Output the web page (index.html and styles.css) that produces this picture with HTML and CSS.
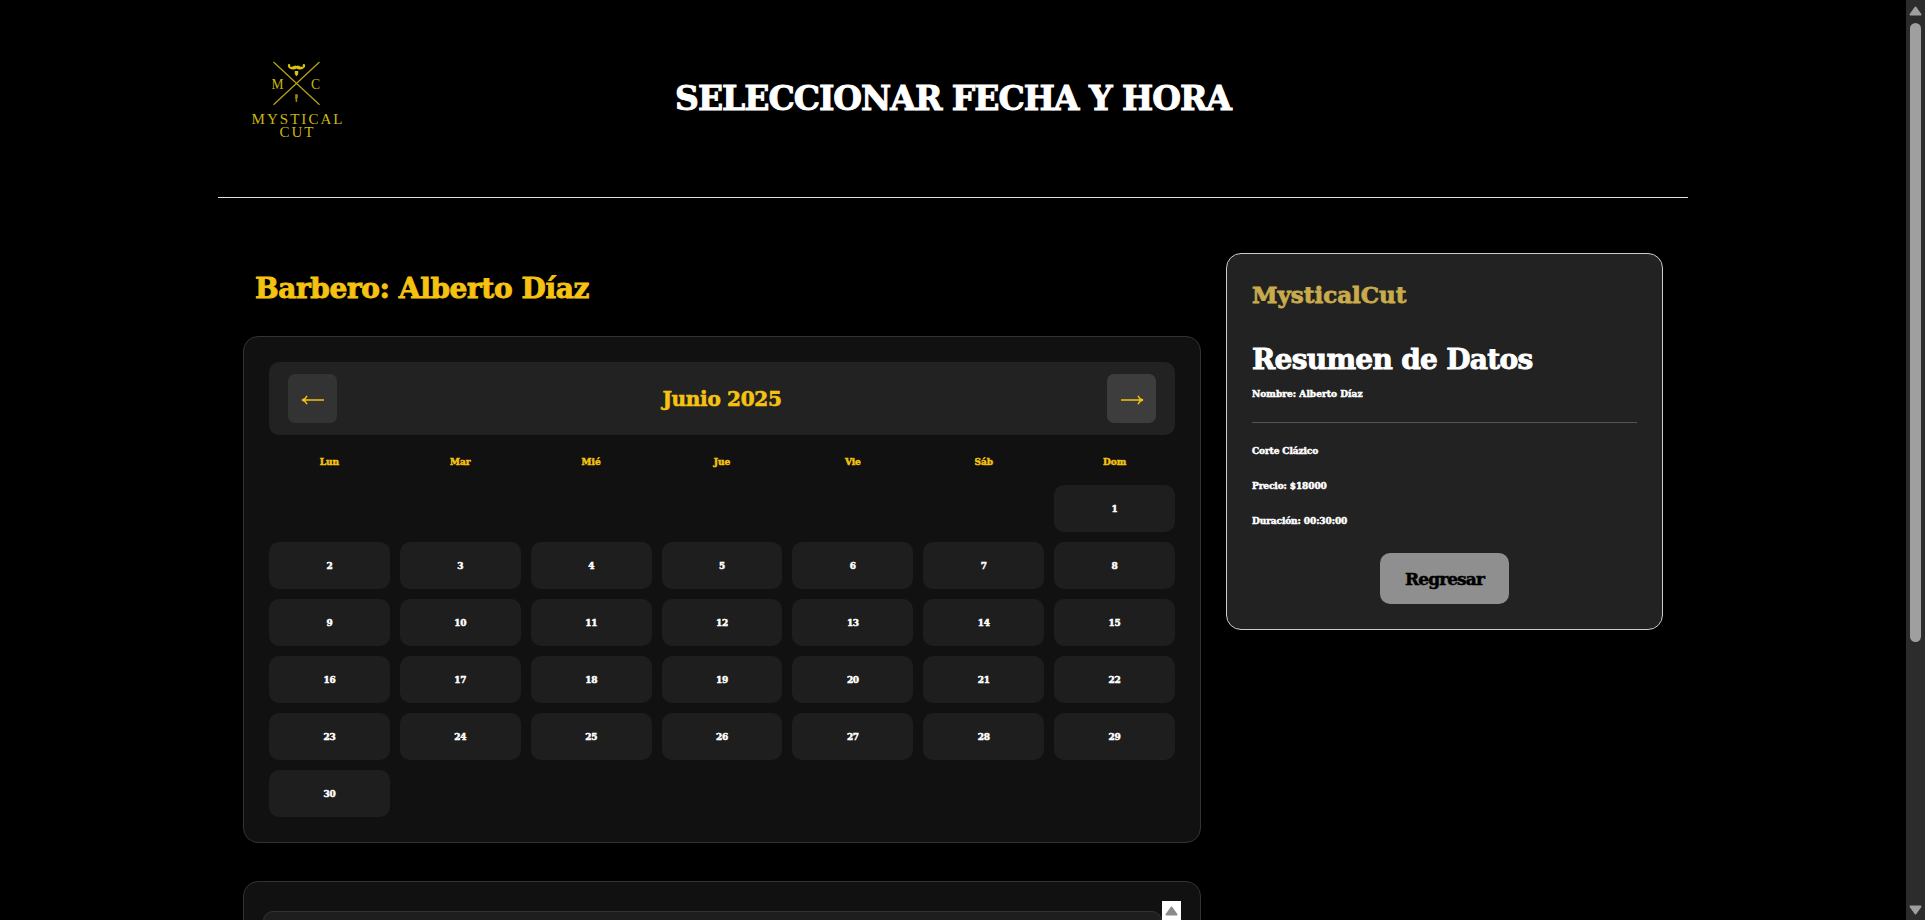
FILE: index.html
```
<!DOCTYPE html>
<html lang="es">
<head>
<meta charset="utf-8">
<title>MysticalCut</title>
<link rel="stylesheet" href="styles.css">
</head>
<body>
<div class="page">
  <header class="top">
    <svg class="logo" viewBox="250 58 94 82" width="94" height="82">
      <g stroke="#b3a013" stroke-width="1.3" fill="none"><path d="M273.500 62 L319.500 104.800 M319.500 62 L273.500 104.800"/></g>
      <path fill="#d8c310" d="M288.300 64.200 C290.500 63.500 291 66.200 289.800 66.200 C290.800 67.400 293 66.300 294.500 65.700 Q295.700 65.200 296.500 66 Q297.300 65.200 298.500 65.700 C300 66.300 302.200 67.400 303.200 66.200 C302 66.200 302.500 63.500 304.700 64.200 C306 66.500 304 68.800 301.500 69.200 Q298 69.800 296.500 68.500 Q295 69.800 291.500 69.200 C289 68.800 287 66.500 288.300 64.200Z M294.800 71 h3.400 v3 l-1.300 1.900 h-.8 l-1.300-1.900z"/>
      <path fill="#978711" d="M295.200 94.300h2.600v3.700h-.6v4h-1.600v-3h-.4z"/>
      <g class="logo-text">
        <text x="271.500" y="89" textLength="12" lengthAdjust="spacingAndGlyphs">M</text>
        <text x="311" y="89" textLength="9" lengthAdjust="spacingAndGlyphs">C</text>
        <text x="251.500" y="124.300" textLength="91">MYSTICAL</text>
        <text x="279.500" y="137.300" textLength="34">CUT</text>
      </g>
    </svg>
    <h1 class="title">SELECCIONAR FECHA Y HORA</h1>
  </header>
  <main class="content">
    <section class="booking">
      <h2 class="barber">Barbero: Alberto Díaz</h2>
      <div class="card calendar">
        <div class="month-bar">
          <button class="nav"><svg width="24" height="12" viewBox="0 0 24 12"><path d="M23 6H1.500M6 1.700 C5 4 3 5.600 1 6 C3 6.400 5 8 6 10.300"/></svg></button>
          <span class="month">Junio 2025</span>
          <button class="nav nav-active"><svg width="24" height="12" viewBox="0 0 24 12"><path d="M1 6H22.500M18 1.700 C19 4 21 5.600 23 6 C21 6.400 19 8 18 10.300"/></svg></button>
        </div>
        <div class="weekdays"><span>Lun</span><span>Mar</span><span>Mié</span><span>Jue</span><span>Vie</span><span>Sáb</span><span>Dom</span></div>
        <div class="days">
          <div class="day first">1</div>
          <div class="day">2</div><div class="day">3</div><div class="day">4</div><div class="day">5</div><div class="day">6</div><div class="day">7</div><div class="day">8</div>
          <div class="day">9</div><div class="day">10</div><div class="day">11</div><div class="day">12</div><div class="day">13</div><div class="day">14</div><div class="day">15</div>
          <div class="day">16</div><div class="day">17</div><div class="day">18</div><div class="day">19</div><div class="day">20</div><div class="day">21</div><div class="day">22</div>
          <div class="day">23</div><div class="day">24</div><div class="day">25</div><div class="day">26</div><div class="day">27</div><div class="day">28</div><div class="day">29</div>
          <div class="day">30</div>
        </div>
      </div>
      <div class="card hours">
        <div class="hours-list"></div>
        <div class="hours-scroll"><svg width="13" height="10" viewBox="0 0 13 10"><path d="M6.500 1.500 11.500 8.500H1.500Z"/></svg></div>
      </div>
    </section>
    <aside class="summary">
      <h3 class="brand">MysticalCut</h3>
      <h2 class="summary-title">Resumen de Datos</h2>
      <p class="client">Nombre: Alberto Díaz</p>
      <hr class="rule">
      <p class="line">Corte Clázico</p>
      <p class="line">Precio: $18000</p>
      <p class="line">Duración: 00:30:00</p>
      <button class="back">Regresar</button>
    </aside>
  </main>
</div>
<div class="scrollbar">
  <svg width="13" height="10" viewBox="0 0 13 10"><path d="M6.500 1.500 11.500 8.500H1.500Z"/></svg>
  <div class="thumb"></div>
  <svg class="down" width="13" height="10" viewBox="0 0 13 10"><path d="M6.500 8.500 11.500 1.500H1.500Z"/></svg>
</div>
</body>
</html>
```
FILE: styles.css
```
* { box-sizing: border-box; }
body {
  margin: 0;
  height: 920px;
  overflow: hidden;
  display: flex;
  background: #000;
  color: #fff;
  font: bold 10px "DejaVu Serif Condensed", "DejaVu Serif", serif;
  -webkit-text-stroke: 0.5px currentColor;
}
h1, h2, h3, p { margin: 0; }
button { border: 0; padding: 0; font: inherit; color: inherit; }

.page { flex: 1; padding: 0 218px; height: 920px; overflow: hidden; }
.top {
  height: 198px;
  border-bottom: 1px solid #e2e2e2;
  display: grid;
  grid-template-columns: 118px 1fr 118px;
  align-items: center;
  padding: 1px 20px 0;
}
.logo { margin-left: 12px; }
.logo-text {
  font: 15px "Liberation Serif", serif;
  fill: #cbb710;
  -webkit-text-stroke: 0.5px #cbb710;
}
.title, .barber, .month, .brand, .summary-title, .back { font-family: "DejaVu Serif", serif; }
.title {
  text-align: center;
  white-space: nowrap;
  font-size: 33px;
  line-height: 40px;
  letter-spacing: -1px;
  -webkit-text-stroke-width: 1px;
}

.content {
  display: grid;
  grid-template-columns: 958px 437px;
  gap: 25px;
  padding: 55px 25px 0;
  align-items: start;
}
.barber {
  margin-bottom: 11px;
  padding-left: 12px;
  color: #f5c211;
  font-size: 28px;
  line-height: 72px;
  letter-spacing: -0.4px;
  -webkit-text-stroke-width: 0.9px;
}
.card { background: #111; border: 1px solid #333; border-radius: 15px; }
.calendar { padding: 25px; }
.month-bar {
  height: 73px;
  padding: 0 19px;
  border-radius: 10px;
  background: #222;
  color: #f5c211;
  display: flex;
  justify-content: space-between;
  align-items: center;
}
.month { font-size: 20px; letter-spacing: -0.3px; -webkit-text-stroke-width: 0.6px; }
.nav {
  width: 49px;
  height: 49px;
  border-radius: 7px;
  background: #333;
  display: flex;
  align-items: center;
  justify-content: center;
}
.nav-active { background: #3d3d3d; }
.nav svg { fill: none; stroke: #f5c211; stroke-width: 1.3; margin-top: 3px; }
.weekdays, .days { display: grid; grid-template-columns: repeat(7, 1fr); gap: 10px; text-align: center; }
.weekdays { height: 50px; padding-top: 3px; line-height: 47px; color: #f5c211; }
.days { grid-auto-rows: 47px; letter-spacing: -0.3px; }
.day { background: #1e1e1e; border-radius: 10px; line-height: 47px; }
.first { grid-column: 7; }

.hours { margin-top: 38px; height: 200px; padding: 19px; display: flex; }
.hours-list { flex: 1; margin-top: 10px; background: #1e1e1e; border: 1px solid #333; border-radius: 10px; }
.hours-scroll { width: 19px; background: #fff; padding: 5px 3px; }
.hours-scroll path { fill: #8b8b8b; stroke: #8b8b8b; stroke-width: 2; stroke-linejoin: round; }

.summary {
  background: #222;
  border: 1px solid #ccc;
  border-radius: 15px;
  padding: 25px;
  display: flex;
  flex-direction: column;
}
.brand { color: #c9ab4c; font-size: 23px; line-height: 32px; -webkit-text-stroke-width: 0.8px; }
.summary-title { margin-top: 29px; font-size: 28px; line-height: 40px; letter-spacing: -0.7px; -webkit-text-stroke-width: 0.9px; }
.client { margin-top: 4px; line-height: 20px; letter-spacing: 0.05px; }
.rule { width: 100%; height: 1px; margin: 18px 0 10px; border: 0; background: #555; }
.line { line-height: 35px; letter-spacing: -0.1px; }
.back {
  align-self: center;
  width: 129px;
  height: 51px;
  margin-top: 15px;
  border-radius: 10px;
  background: #8f8f8f;
  color: #000;
  font-size: 17px;
  letter-spacing: -0.9px;
}

.scrollbar { width: 19px; background: #2c2c2c; display: flex; flex-direction: column; align-items: center; padding: 6px 0 5px; }
.scrollbar path { fill: #9f9f9f; stroke: #9f9f9f; stroke-width: 2; stroke-linejoin: round; }
.thumb { width: 11px; height: 619px; margin-top: 7px; border-radius: 6px; background: #9f9f9f; }
.down { margin-top: auto; }
```
